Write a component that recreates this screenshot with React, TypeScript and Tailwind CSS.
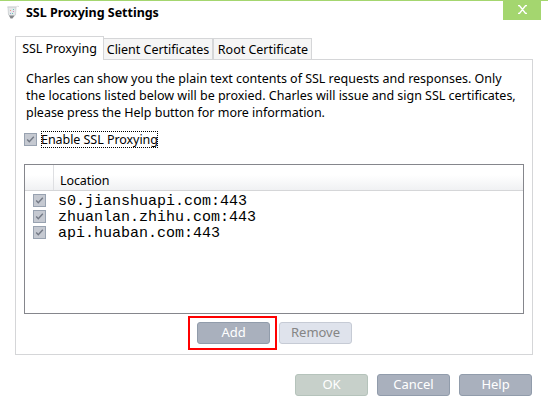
import type { ReactNode } from 'react';

const hosts = ['s0.jianshuapi.com:443', 'zhuanlan.zhihu.com:443', 'api.huaban.com:443'];

function CheckBox() {
  return (
    <span className="flex size-[13px] shrink-0 items-center justify-center border border-[#98a2b0] bg-[#c5c9d1]">
      <svg width="9" height="9" viewBox="0 0 9 9" fill="none">
        <path d="M1.2 4.6 3.3 6.8 7.8 1.8" stroke="#737985" strokeWidth="1.4" />
      </svg>
    </span>
  );
}

function Button({ tone, children }: { tone: string; children: ReactNode }) {
  return (
    <button className={`flex h-[22px] w-[73px] items-center justify-center rounded-[3px] border pb-[2px] text-[13px] leading-none ${tone}`}>
      {children}
    </button>
  );
}

const slate = 'border-[#919cab] bg-[#a9b0bd] text-white';

export default function App() {
  return (
    <div className="h-[412px] w-[548px] overflow-hidden bg-white font-['Noto_Sans','Open_Sans',sans-serif] text-[12.5px] tracking-[-0.02px] text-black">
      <header className="flex h-9 items-start border-t border-[#a4d66f] pl-[6px] pr-[7px]">
        <svg className="mt-[4px] shrink-0" width="14" height="15" viewBox="0 0 14 15">
          <path d="M2 2H10L9.5 10L7 12H5L2.5 10Z" fill="#e5e8e9" stroke="#c9cdcf" strokeWidth=".8" />
          <path d="M1 2H10M10 2Q11 .8 13 1.5" fill="none" stroke="#d2d3d5" strokeWidth=".8" />
          <path d="M3 10.5H8.5L6.5 13.5H4.5Z" fill="#85878a" />
          <path d="M4 5h1v1H4z" fill="#e99c8c" />
          <path d="M7 4h1v1H7zM6 8h1v1H6z" fill="#65c4bc" />
          <path d="M7 6h1v1H7z" fill="#d78cbd" />
          <path d="M4 8h1v1H4z" fill="#91a8da" />
        </svg>
        <h1 className="ml-[6px] mt-[3px] whitespace-nowrap text-[12.5px] font-bold leading-[17px]">SSL Proxying Settings</h1>
        <button className="ml-auto flex h-[19px] w-[38px] items-start justify-start bg-[#a4d66f] pl-[15px] pt-[4px]" aria-label="Close">
          <svg width="9" height="9" viewBox="0 0 9 9" fill="none" stroke="white" strokeWidth="1.4">
            <path d="M1 0 8 9M8 0 1 9M0 .5H2M7 .5H9M0 8.5H2M7 8.5H9" />
          </svg>
        </button>
      </header>

      <div className="mx-[15px]">
        <nav className="flex h-6 items-end whitespace-nowrap">
          <div className="flex h-6 w-[89px] items-center justify-center border-x border-t border-[#d5d6d8] bg-white pt-px">SSL Proxying</div>
          <div className="flex h-[22px] w-[109px] items-center justify-center border-y border-r border-[#d5d6d8] bg-[#f5f5f5] pt-[2px]">Client Certificates</div>
          <div className="flex h-[22px] w-[99px] items-center justify-center border border-[#d5d6d8] bg-[#f5f5f5] pl-px pt-[2px]">Root Certificate</div>
          <div className="flex-1 border-b border-[#d5d6d8]" />
        </nav>
        <main className="flex h-[295px] flex-col border-x border-b border-[#d5d6d8] pl-2 pr-[8px] pt-[10px]">
          <div className="whitespace-nowrap pl-[2px] leading-[17px]">
            <p>Charles can show you the plain text contents of SSL requests and responses. Only</p>
            <p>the locations listed below will be proxied. Charles will issue and sign SSL certificates,</p>
            <p>please press the Help button for more information.</p>
          </div>
          <label className="mt-[10px] flex h-[17px] items-center gap-1">
            <CheckBox />
            <span className="flex h-[17px] w-[117px] items-center whitespace-nowrap border border-dotted border-black pt-[2px] leading-none">
              <span className="-ml-px tracking-[-0.05px]">Enable SSL Proxying</span>
            </span>
          </label>
          <section className="mt-4 h-[150px] border border-[#85868c]">
            <div className="flex h-[26px] border-b border-[#d5d6d8] bg-linear-to-b from-white from-40% to-[#f0f1f3]">
              <div className="w-[29px] border-r border-[#dedfe2]" />
              <div className="flex items-center pl-[6px] pt-[7px] tracking-[-0.1px]">Location</div>
            </div>
            <div className="pt-[3px] font-['Liberation_Mono',monospace] text-[15px] tracking-normal">
              {hosts.map((host) => (
                <div key={host} className="flex h-4 items-start gap-3 pl-2">
                  <CheckBox />
                  <span className="leading-4">{host}</span>
                </div>
              ))}
            </div>
          </section>
          <div className="mt-[2px] flex h-[34px] items-center pl-[164px]">
            <div className="flex h-[34px] w-[89px] items-center justify-end border-2 border-[#ff0000] pr-[5px]">
              <Button tone={slate}>Add</Button>
            </div>
            <div className="ml-[2px]">
              <Button tone="border-[#c6cbd5] bg-[#dfe3ec] text-[#858585]">Remove</Button>
            </div>
          </div>
        </main>
        <footer className="mt-[19px] flex justify-end gap-[9px] pr-[1px]">
          <Button tone="border-[#b5c3bb] bg-[#c7d0ca] text-white">OK</Button>
          <Button tone={slate}>Cancel</Button>
          <Button tone={slate}>Help</Button>
        </footer>
      </div>
    </div>
  );
}
